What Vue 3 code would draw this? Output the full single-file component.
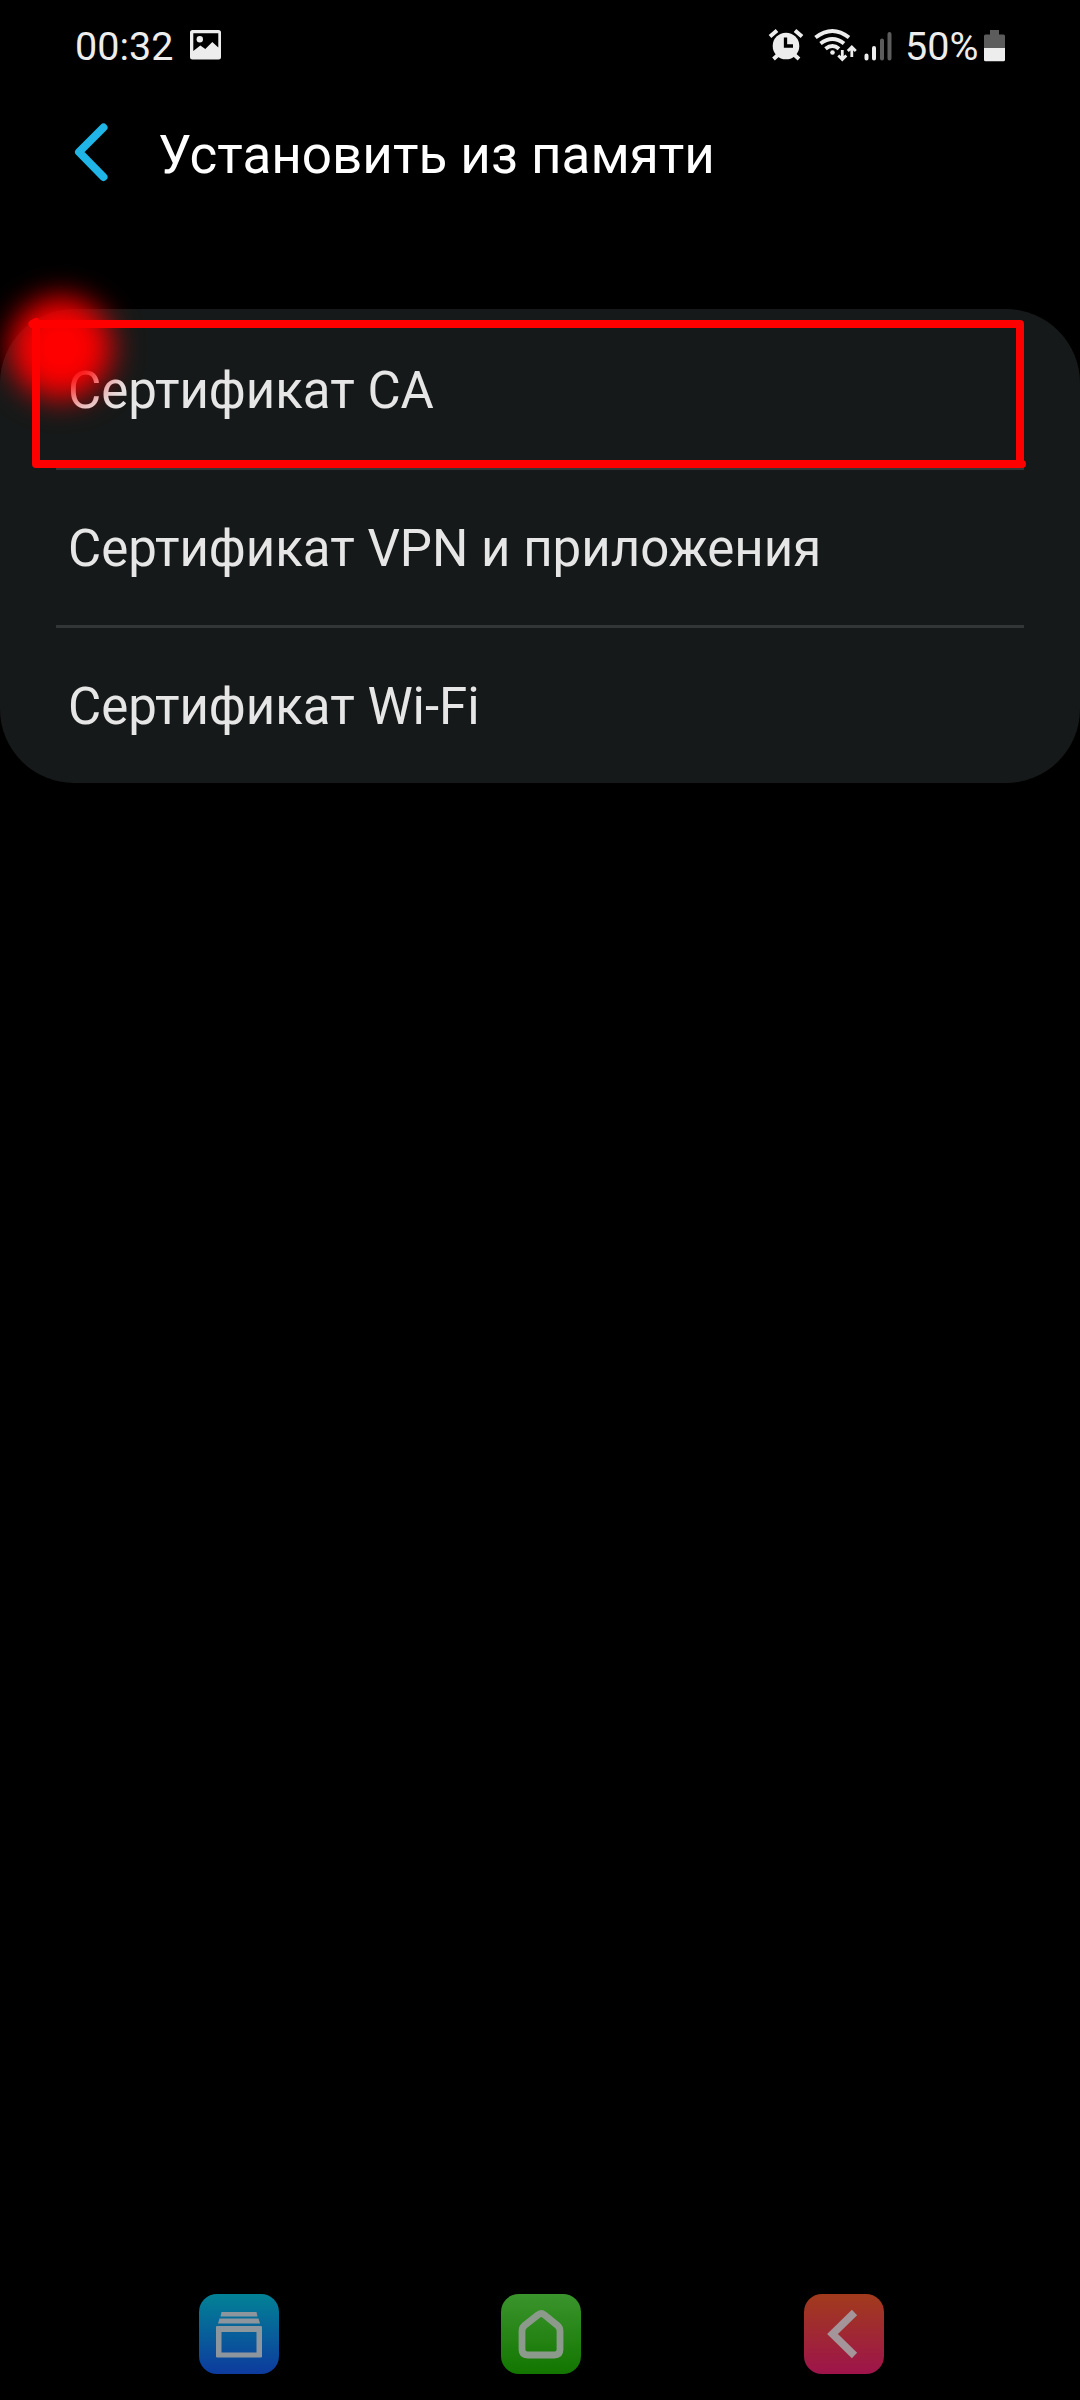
<script setup>
const rows = ['Сертификат CA', 'Сертификат VPN и приложения', 'Сертификат Wi-Fi']
</script>

<template>
  <div class="screen">
    <header class="status">
      <div class="status-left">
        <span class="clock">00:32</span>
        <svg class="picture" width="31" height="30" viewBox="0 0 31 30">
          <path fill="#ededed" fill-rule="evenodd" d="M2.5 0h26a2.5 2.5 0 0 1 2.5 2.500v24.500a2.500 2.500 0 0 1-2.500 2.500h-26a2.500 2.500 0 0 1-2.500-2.500v-24.500a2.500 2.500 0 0 1 2.500-2.500zM3.300 3.300v17.700l7-5.500 5 3.500 7-7 6 5.500v-14.200z" />
          <circle cx="9.800" cy="9.300" r="3.200" fill="#ededed" />
        </svg>
      </div>
      <svg class="signals" width="124" height="34" viewBox="768 28 124 34">
        <g stroke="#ededed" fill="none">
          <path stroke-width="4" d="M770 36.500l7-6M795 30.500l7 6M779 54l-5.500 5M793.500 54l5.500 5" />
          <circle cx="786" cy="46" r="13.300" fill="#ededed" stroke="none" />
          <path stroke="#000" stroke-width="3.300" d="M785.500 37.500v8.500h7.500" />
          <g stroke-width="4">
            <path d="M815.500 37.500q17-13 33.500 0" />
            <path d="M820.500 43.500q12-9 23.500 0" />
            <path d="M825.500 48.700q7-5.500 13.500 0" />
          </g>
          <circle cx="832.500" cy="52.500" r="2.300" fill="#ededed" stroke="none" />
          <path stroke-width="2.800" d="M842.300 50v9M838.300 55.500l4 4 4-4M851.800 57v-9.500M847.800 51l4-4 4 4" />
          <g stroke-width="4" stroke-linecap="round">
            <path d="M866.500 55.500v3M874 48v10.500" />
            <path stroke="#5c5c5c" d="M882 40.500v18M889.500 34v24.500" />
          </g>
        </g>
      </svg>
      <span class="percent">50%</span>
      <svg class="battery" width="21" height="32" viewBox="0 0 21 32">
        <path fill="#5c5c5c" d="M6 0h9v4.500h4.500a1.500 1.500 0 0 1 1.500 1.500v12h-21v-12a1.500 1.500 0 0 1 1.500-1.500h4.500z" />
        <path fill="#ededed" d="M0 18h21v11.800a1.500 1.500 0 0 1-1.500 1.500h-18a1.500 1.500 0 0 1-1.500-1.500z" />
      </svg>
    </header>

    <div class="titlebar">
      <svg class="back" width="34" height="60" viewBox="0 0 34 60">
        <path d="M29.500 4.500L5 29 29.500 54" fill="none" stroke="#1fb5e6" stroke-width="8" stroke-linecap="round" stroke-linejoin="round" />
      </svg>
      <h1>Установить из памяти</h1>
    </div>

    <main class="card">
      <div v-for="row in rows" :key="row" class="row">{{ row }}</div>
      <div class="glow"></div>
      <svg class="frame" width="1080" height="180" viewBox="0 300 1080 180">
        <path d="M36 324H1020V464H36z" fill="none" stroke="#f00" stroke-width="8" stroke-linejoin="round" />
        <path d="M32.500 324L36 322M1020 464h2" stroke="#f00" stroke-width="8" stroke-linecap="round" />
      </svg>
    </main>

    <nav class="nav">
      <div class="key recent">
        <svg width="80" height="80" viewBox="0 0 80 80">
          <g fill="#8d959d">
            <path d="M22.500 18h35l1 4.500h-37z" />
            <path d="M20.500 24.500h39l1.500 5h-42z" />
            <path fill-rule="evenodd" d="M18 32h44a1 1 0 0 1 1 1v29.500a1 1 0 0 1-1 1h-44a1 1 0 0 1-1-1v-29.500a1 1 0 0 1 1-1zM22.500 38v20.500h35v-20.500z" />
          </g>
        </svg>
      </div>
      <div class="key home">
        <svg width="80" height="80" viewBox="0 0 80 80">
          <path d="M36.800 21L23.500 31.500Q21 33.500 21 37V55.500Q21 61 26.500 61H53.500Q59 61 59 55.500V37Q59 33.500 56.500 31.500L43.500 21Q40 18 36.800 21z" fill="none" stroke="#8b9a8b" stroke-width="6.800" />
        </svg>
      </div>
      <div class="key prev">
        <svg width="80" height="80" viewBox="0 0 80 80">
          <path d="M50.500 18.500L28.500 40 50.500 61.500" fill="none" stroke="#a39599" stroke-width="7.500" />
        </svg>
      </div>
    </nav>
  </div>
</template>

<style>
body {
  background: #000;
}
</style>

<style scoped>
.screen {
  width: 1080px;
  height: 2400px;
  display: flex;
  flex-direction: column;
  background: #000;
  font-family: Roboto, 'Liberation Sans', sans-serif;
  overflow: hidden;
}
svg {
  display: block;
  flex: none;
}
.status {
  height: 94px;
  box-sizing: border-box;
  padding: 0 75px 0 75px;
  display: flex;
  align-items: center;
  color: #ededed;
  font-size: 39.5px;
  line-height: 96px;
}
.status-left {
  display: flex;
  align-items: center;
  flex: 1;
}
.clock {
  width: 115px;
}
.picture {
  margin-top: -5px;
}
.signals {
  margin-top: -4px;
}
.percent {
  width: 79px;
  margin-left: 13px;
  white-space: nowrap;
}
.battery {
  margin-top: -3px;
}
.titlebar {
  height: 215px;
  box-sizing: border-box;
  padding: 29px 0 0 74px;
  display: flex;
  align-items: flex-start;
}
h1 {
  margin: 0 0 0 50px;
  font-size: 53px;
  line-height: 64px;
  font-weight: 400;
  color: #fff;
  white-space: nowrap;
}
.card {
  position: relative;
  height: 474px;
  background: #161919;
  border-radius: 74px;
}
.row {
  height: 158px;
  box-sizing: border-box;
  margin: 0 56px;
  padding: 5px 0 0 12px;
  line-height: 153px;
  font-size: 51px;
  color: #e6e6e6;
  white-space: nowrap;
}
.row + .row {
  box-shadow: inset 0 3px 0 #333636;
}
.glow {
  position: absolute;
  left: 10px;
  top: -12px;
  width: 102px;
  height: 102px;
  border-radius: 50%;
  background: #f00;
  filter: blur(15px);
}
.frame {
  position: absolute;
  left: 0;
  top: -9px;
}
.nav {
  margin-top: auto;
  padding: 0 196px 26px 199px;
  display: flex;
  justify-content: space-between;
}
.key {
  width: 80px;
  height: 80px;
  border-radius: 18px;
}
.home {
  margin-left: -1px;
}
.recent {
  background: linear-gradient(#028296, #0d3b9e);
}
.home {
  background: linear-gradient(#3b942d, #137600);
}
.prev {
  background: linear-gradient(#a13b1c, #9e144b);
}
</style>
